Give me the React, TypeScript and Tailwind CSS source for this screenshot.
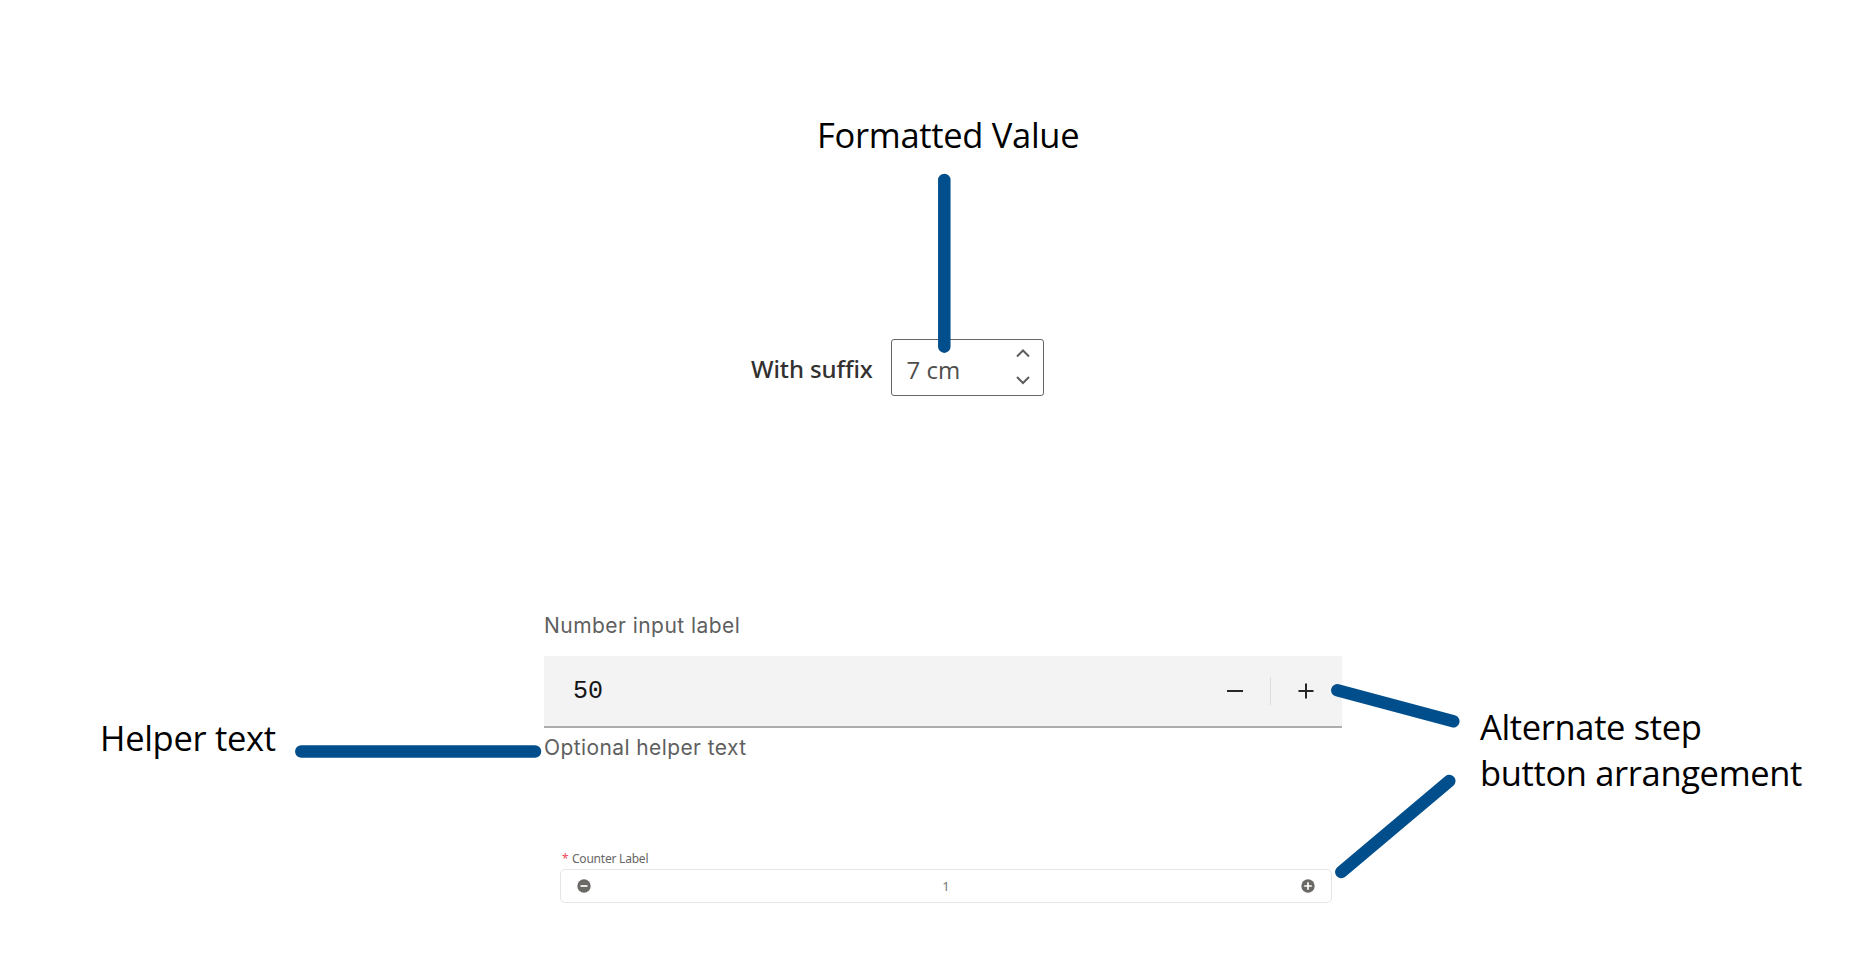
import type { ReactNode } from "react";

function Callout({ children, className }: { children: ReactNode; className: string }) {
  return (
    <p className={`font-['Open_Sans',sans-serif] text-[34.5px] whitespace-nowrap text-black ${className}`}>
      {children}
    </p>
  );
}

function SuffixField() {
  return (
    <div className="ml-[751px] flex h-14 items-center text-[24px]">
      <label className="w-[139.5px] pt-1 font-['Noto_Sans',sans-serif] font-medium tracking-[-0.1px] whitespace-nowrap text-[#323130]">
        With suffix
      </label>
      <div className="flex h-[57px] w-[153.5px] items-center justify-between rounded-[3px] border-[1.5px] border-[#666] pr-3 pl-[15px]">
        <span className="pt-1.5 font-['Open_Sans',sans-serif] text-[24px] text-[#504e4c]">7 cm</span>
        <svg width="16" height="40" viewBox="0 0 16 40" fill="none" stroke="#605e5c" strokeWidth="2">
          <path d="M2 9.500 8 3.500l6 6M2 30l6 6 6-6" />
        </svg>
      </div>
    </div>
  );
}

function NumberField() {
  return (
    <div className="w-[798px] font-['Inter',sans-serif]">
      <div className="h-[47px] text-[21px] leading-[34px] tracking-[0.45px] text-[#5f5f5f]">Number input label</div>
      <div className="flex h-[72px] items-center border-b-2 border-[#adadad] bg-[#f3f3f3] pl-[29px]">
        <span className="flex-1 pt-0.5 font-['Liberation_Mono',monospace] text-[25px] text-[#161616]">50</span>
        <svg width="120" height="32" viewBox="0 0 120 32" fill="none" stroke="#262626" strokeWidth="2">
          <path d="M5 16h16M76.500 16h15M84 8.500v15" />
          <path d="M48.500 2v28" stroke="#dedede" strokeWidth="1" />
        </svg>
      </div>
      <div className="pt-px text-[21px] leading-[37px] tracking-[0.4px] text-[#5f5f5f]">Optional helper text</div>
    </div>
  );
}

function StepIcon({ plus = false }: { plus?: boolean }) {
  return (
    <svg width="14" height="14" viewBox="0 0 14 14" stroke="#fff" strokeWidth="1.700">
      <circle cx="7" cy="7" r="6.700" fill="#6b6966" stroke="none" />
      <path d={plus ? "M3.200 7h7.600M7 3.200v7.600" : "M3.500 7h7"} />
    </svg>
  );
}

function CounterField() {
  return (
    <div className="ml-[16px] w-[772px] font-['Noto_Sans',sans-serif] text-[12px]">
      <div className="flex h-[22px] items-center pt-0.5 tracking-[-0.22px] text-[#666]">
        <span className="w-[12px] pl-0.5 text-[#f0485c]">*</span>Counter Label
      </div>
      <div className="flex h-[34px] items-center justify-between rounded-[5px] border border-[#e5e5e5] px-[16px] text-[#777]">
        <StepIcon />
        <span className="pt-0.5 text-[13px]">1</span>
        <StepIcon plus />
      </div>
    </div>
  );
}

export default function App() {
  return (
    <main className="relative h-[967px] w-[1851px] overflow-hidden bg-white">
      <header className="h-[339px] pt-[113px] pl-[817px]">
        <Callout className="leading-[44px] tracking-[-0.3px]">Formatted Value</Callout>
      </header>
      <SuffixField />
      <section className="flex pt-[214px]">
        <div className="w-[544px] pt-[106px] pl-[100px]">
          <Callout className="leading-[46px] tracking-[-0.3px]">Helper text</Callout>
        </div>
        <div className="flex w-[798px] flex-col gap-[81px]">
          <NumberField />
          <CounterField />
        </div>
        <div className="pt-[95px] pl-[138px]">
          <Callout className="leading-[46px] tracking-[-0.35px]">Alternate step<br />button arrangement</Callout>
        </div>
      </section>
      <svg className="pointer-events-none absolute inset-0" width="1851" height="967" fill="none" stroke="#004f8c" strokeWidth="12.500" strokeLinecap="round">
        <path d="M944.300 180v166.700M301.300 751.500H535M1337.300 690.300l116 31M1341.300 872l108-91" />
      </svg>
    </main>
  );
}
